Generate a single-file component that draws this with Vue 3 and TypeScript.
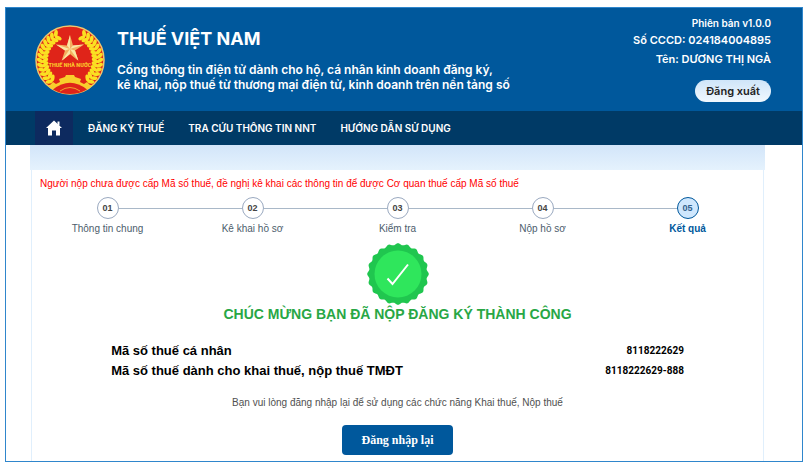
<script setup lang="ts">
interface Step {
  no: string
  label: string
}

interface Leaf {
  x: number
  y: number
  angle: number
}

const menu: string[] = ['ĐĂNG KÝ THUẾ', 'TRA CỨU THÔNG TIN NNT', 'HƯỚNG DẪN SỬ DỤNG']

const steps: Step[] = [
  { no: '01', label: 'Thông tin chung' },
  { no: '02', label: 'Kê khai hồ sơ' },
  { no: '03', label: 'Kiểm tra' },
  { no: '04', label: 'Nộp hồ sơ' },
  { no: '05', label: 'Kết quả' },
]
const current = '05'

const taxCodes = [
  { label: 'Mã số thuế cá nhân', value: '8118222629' },
  { label: 'Mã số thuế dành cho khai thuế, nộp thuế TMĐT', value: '8118222629-888' },
]

// Rice grains of the wreath, in two rows on each side of the emblem
const leaves: Leaf[] = []
for (const radius of [25, 30]) {
  for (let deg = -62; deg <= 46; deg += 9) {
    const rad = (deg * Math.PI) / 180
    const tilt = radius === 25 ? -55 : 55
    const x = radius * Math.cos(rad)
    const y = radius * Math.sin(rad)
    leaves.push({ x: 35 + x, y: 35 + y, angle: deg + 90 + tilt })
    leaves.push({ x: 35 - x, y: 35 + y, angle: 90 - deg - tilt })
  }
}

// Wavy edge of the success seal: 20 soft scallops
const sealPoints: string[] = []
for (let i = 0; i < 240; i++) {
  const a = (i / 240) * Math.PI * 2
  const r = 29.9 + 0.9 * Math.cos(a * 20)
  sealPoints.push(`${(31 + r * Math.cos(a)).toFixed(2)},${(31 + r * Math.sin(a)).toFixed(2)}`)
}
const sealEdge = sealPoints.join(' ')
</script>

<template>
  <div class="frame">
    <header class="header">
      <svg class="emblem" viewBox="0 0 70 70" role="img" aria-label="Thuế Nhà nước">
        <circle cx="35" cy="35" r="34" fill="#df2419" stroke="#f0c66c" stroke-width="1.5" />
        <ellipse
          v-for="(leaf, i) in leaves"
          :key="i"
          :cx="leaf.x"
          :cy="leaf.y"
          rx="3.6"
          ry="1.9"
          fill="#fbe022"
          :transform="`rotate(${leaf.angle} ${leaf.x} ${leaf.y})`"
        />
        <path
          d="M12 60 L15 60 L18 57 L21 59 L25 57 L24 54 L30 52 L31 50 L39 50 L40 52 L46 54 L45 57 L49 59 L52 57 L55 60 L58 60 A34 34 0 0 1 12 60Z"
          fill="#f8cf2c"
        />
        <path d="M18 64.5 Q35 51 52 64.5 A34 34 0 0 1 18 64.5Z" fill="#df2419" />
        <path d="M25 66 Q35 59 45 66" fill="none" stroke="#f0a52c" stroke-width="1" />
        <path
          d="M35 10 L38 20.5 L49 19.5 L40 25.5 L43.5 36 L35 29 L26.5 36 L30 25.5 L21 19.5 L32 20.5Z"
          fill="#f3b060"
        />
        <path
          d="M35 10 L35 24 L32 20.5Z M49 19.5 L35 24 L38 20.5Z M43.5 36 L35 24 L40 25.5Z M26.5 36 L35 24 L35 29Z M21 19.5 L35 24 L30 25.5Z"
          fill="#fbe6a4"
        />
        <rect x="14" y="35.5" width="42" height="8" fill="#df2419" />
        <text
          x="35"
          y="41.5"
          text-anchor="middle"
          font-family="Roboto, 'Liberation Sans', sans-serif"
          font-size="5.4"
          font-weight="900"
          fill="#fbc52b"
        >THUẾ NHÀ NƯỚC</text>
      </svg>
      <div class="brand">
        <h1>THUẾ VIỆT NAM</h1>
        <p>
          Cổng thông tin điện tử dành cho hộ, cá nhân kinh doanh đăng ký,<br />
          kê khai, nộp thuế từ thương mại điện tử, kinh doanh trên nền tảng số
        </p>
      </div>
      <div class="account">
        <span class="version">Phiên bản v1.0.0</span>
        <span>Số CCCD: 024184004895</span>
        <span>Tên: DƯƠNG THỊ NGÀ</span>
        <button type="button" class="logout">Đăng xuất</button>
      </div>
    </header>

    <nav class="nav">
      <a href="#" class="home" aria-label="Trang chủ">
        <svg viewBox="0 0 16 16">
          <path d="M8 0.5 L16 8 L14 8 L14 15.5 L10 15.5 L10 10.5 L6 10.5 L6 15.5 L2 15.5 L2 8 L0 8Z" fill="#fff" />
          <path d="M11.5 1.5h2v4h-2z" fill="#fff" />
        </svg>
      </a>
      <a v-for="item in menu" :key="item" href="#" class="link">{{ item }}</a>
    </nav>

    <main class="panel">
      <div class="band"></div>
      <div class="body">
        <p class="warning">
          Người nộp chưa được cấp Mã số thuế, đề nghị kê khai các thông tin để được Cơ quan thuế cấp Mã số thuế
        </p>
        <ol class="steps">
          <li v-for="step in steps" :key="step.no" :class="{ active: step.no === current }">
            <span class="track"><span class="dot">{{ step.no }}</span></span>
            <span class="label">{{ step.label }}</span>
          </li>
        </ol>
        <section class="result">
          <svg class="seal" viewBox="0 0 62 62" aria-hidden="true">
            <polygon :points="sealEdge" fill="#20c64f" />
            <circle cx="31" cy="31" r="23.5" fill="#2fe65c" />
            <path d="M20.5 35.5 L25.5 41 L41 21.5" fill="none" stroke="#fff" stroke-width="2" />
          </svg>
          <h2>CHÚC MỪNG BẠN ĐÃ NỘP ĐĂNG KÝ THÀNH CÔNG</h2>
          <dl class="codes">
            <div v-for="code in taxCodes" :key="code.label">
              <dt>{{ code.label }}</dt>
              <dd>{{ code.value }}</dd>
            </div>
          </dl>
          <p class="hint">Bạn vui lòng đăng nhập lại để sử dụng các chức năng Khai thuế, Nộp thuế</p>
          <button type="button" class="relogin">Đăng nhập lại</button>
        </section>
      </div>
    </main>
  </div>
</template>

<style>
body {
  margin: 0;
  background: #fff;
}
</style>

<style scoped>
* {
  box-sizing: border-box;
}

h1,
h2,
p,
ol,
dl,
dd {
  margin: 0;
  padding: 0;
}

.frame {
  margin: 7px 6px 8px 5px;
  border: 1px solid #2f86cc;
  font-family: 'Liberation Sans', Arial, sans-serif;
  font-size: 12px;
}

.header {
  display: flex;
  align-items: flex-start;
  padding: 7px 31px 9px 29px;
  background: #00589c;
  color: #fff;
  font-family: Inter, 'Open Sans', sans-serif;
}

.emblem {
  flex: none;
  width: 70px;
  height: 70px;
  margin-top: 10px;
}

.brand {
  flex: 1;
  padding: 12px 0 0 12px;
}

.brand h1 {
  font-size: 18px;
  font-weight: 700;
  line-height: 24px;
}

.brand p {
  margin-top: 11px;
  font-size: 12px;
  font-weight: 600;
  line-height: 15px;
  white-space: nowrap;
}

.account {
  display: flex;
  flex-direction: column;
  align-items: flex-end;
  font-size: 11px;
  font-weight: 600;
  line-height: 19px;
}

.version {
  font-size: 10px;
  line-height: 16px;
}

.logout {
  height: 22px;
  margin-top: 11px;
  padding: 0 11px;
  border: 0;
  border-radius: 11px;
  background: linear-gradient(#cfe5f9, #f1f8fe);
  color: #222;
  font: 600 11px/22px Inter, 'Open Sans', sans-serif;
}

.nav {
  display: flex;
  align-items: stretch;
  height: 34px;
  padding-left: 29px;
  background: #003a66;
  font: 600 10px/34px Inter, 'Open Sans', sans-serif;
}

.home {
  display: flex;
  align-items: center;
  justify-content: center;
  width: 38px;
  margin-right: 3px;
  background: #0d2a5f;
}

.home svg {
  width: 16px;
  height: 16px;
}

.link {
  padding: 0 12px;
  color: #fff;
  text-decoration: none;
}

.panel {
  margin: 0 37px 0 24px;
}

.band {
  height: 25px;
  background: linear-gradient(#d2e5f9, #e5f2fd);
}

.body {
  margin: 0 1px;
  padding: 6px 3px;
  border: solid #e0effc;
  border-width: 0 1px;
}

.warning {
  padding-left: 5px;
  color: #f00;
  font-size: 10px;
  line-height: 16px;
}

.steps {
  display: flex;
  margin-top: 5px;
  list-style: none;
}

.steps li {
  flex: 1;
  text-align: center;
}

.track {
  display: flex;
  align-items: center;
}

.track::before,
.track::after {
  content: '';
  flex: 1;
  height: 1px;
  background: #a9b8c8;
}

li:first-child .track::before,
li:last-child .track::after {
  background: none;
}

.dot {
  width: 22px;
  height: 22px;
  border: 1px solid #9aa9c0;
  border-radius: 50%;
  color: #444;
  font-size: 9px;
  font-weight: 700;
  line-height: 20px;
}

.label {
  display: block;
  margin-top: 2px;
  color: #4d5d6c;
  font-size: 10px;
  line-height: 16px;
}

.active .dot {
  border-color: #00589c;
  background: #cfe7fd;
  color: #33618c;
}

.active .label {
  color: #00589c;
  font-weight: 700;
}

.result {
  display: flex;
  flex-direction: column;
  align-items: center;
}

.seal {
  width: 62px;
  height: 62px;
  margin-top: 6px;
}

h2 {
  color: #28a745;
  font-size: 14px;
  line-height: 18px;
}

.codes {
  width: 79%;
  margin-top: 18px;
  color: #000;
  font-weight: 700;
}

.codes div {
  display: flex;
  justify-content: space-between;
  line-height: 20px;
}

.codes dt {
  font-size: 13px;
}

.codes dd {
  font-family: Roboto, 'Liberation Sans', sans-serif;
  font-size: 10px;
}

.hint {
  margin-top: 14px;
  color: #505050;
  font-size: 10px;
  line-height: 16px;
}

.relogin {
  height: 30px;
  margin-top: 14px;
  padding: 0 19px;
  border: 0;
  border-radius: 4px;
  background: #00589c;
  color: #fff;
  font: 700 12px/30px 'Liberation Serif', 'Times New Roman', serif;
}
</style>
